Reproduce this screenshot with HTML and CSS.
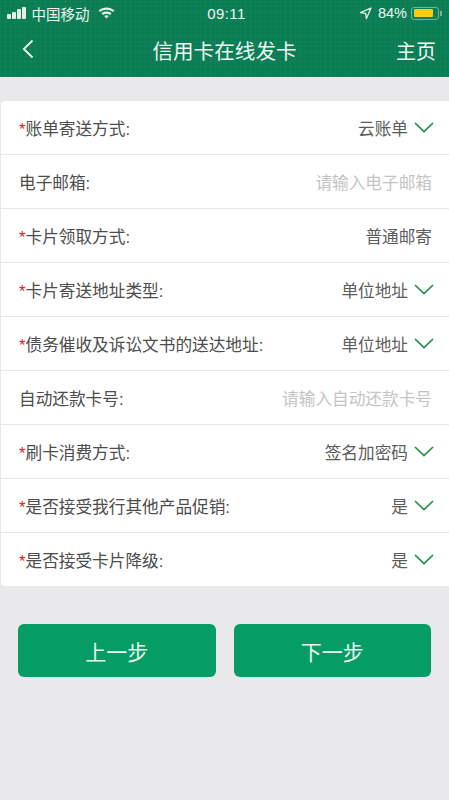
FILE: index.html
```html
<!DOCTYPE html>
<html lang="zh-CN">
<head>
    <meta charset="UTF-8">
    <meta name="viewport" content="width=device-width, initial-scale=1.0">
    <title>信用卡在线发卡</title>
    <link rel="stylesheet" href="styles.css">
</head>
<body>
    <header class="top">
        <div class="status-bar">
            <div class="status-left">
                <span class="signal"><i class="b1"></i><i class="b2"></i><i class="b3"></i><i class="b4"></i></span>
                <span class="carrier">中国移动</span>
                <svg class="wifi" width="17" height="13" viewBox="0 0 17 13">
                    <path d="M0.5 4.4C5 0.4 12 0.4 16.5 4.4L14.9 6.1C11.2 2.9 5.8 2.9 2.1 6.1Z" fill="#e4f1ea"/>
                    <path d="M3.4 7.2C6.2 4.9 10.8 4.9 13.6 7.2L12 8.9C10 7.3 7 7.3 5 8.9Z" fill="#e4f1ea"/>
                    <path d="M6.2 10C7.5 9 9.5 9 10.8 10L8.5 12.6Z" fill="#e4f1ea"/>
                </svg>
            </div>
            <div class="status-time">09:11</div>
            <div class="status-right">
                <svg class="arrow" width="13" height="13" viewBox="0 0 13 13">
                    <path d="M12 1L1.5 5.6L6.6 6.4L7.4 11.6Z" fill="none" stroke="#e4f1ea" stroke-width="1.3" stroke-linejoin="round"/>
                </svg>
                <span>84%</span>
                <span class="battery"><span class="battery-level"></span></span>
                <span class="battery-tip"></span>
            </div>
        </div>
        <div class="nav-bar">
            <svg class="back" width="12" height="20" viewBox="0 0 12 20">
                <path d="M10.5 1.5L1.8 10L10.5 18.5" fill="none" stroke="#eef6f2" stroke-width="1.8"/>
            </svg>
            <h1>信用卡在线发卡</h1>
            <span class="home">主页</span>
        </div>
    </header>

    <div class="form-card">
        <div class="row">
            <span class="label"><em>*</em>账单寄送方式:</span>
            <span class="value">云账单</span>
            <svg class="chevron" width="20" height="11" viewBox="0 0 20 11"><path d="M1 1L10 9.5L19 1" fill="none" stroke="#1e9048" stroke-width="1.7"/></svg>
        </div>
        <div class="row">
            <span class="label">电子邮箱:</span>
            <span class="placeholder">请输入电子邮箱</span>
        </div>
        <div class="row">
            <span class="label"><em>*</em>卡片领取方式:</span>
            <span class="value">普通邮寄</span>
        </div>
        <div class="row">
            <span class="label"><em>*</em>卡片寄送地址类型:</span>
            <span class="value">单位地址</span>
            <svg class="chevron" width="20" height="11" viewBox="0 0 20 11"><path d="M1 1L10 9.5L19 1" fill="none" stroke="#1e9048" stroke-width="1.7"/></svg>
        </div>
        <div class="row">
            <span class="label"><em>*</em>债务催收及诉讼文书的送达地址:</span>
            <span class="value">单位地址</span>
            <svg class="chevron" width="20" height="11" viewBox="0 0 20 11"><path d="M1 1L10 9.5L19 1" fill="none" stroke="#1e9048" stroke-width="1.7"/></svg>
        </div>
        <div class="row">
            <span class="label">自动还款卡号:</span>
            <span class="placeholder">请输入自动还款卡号</span>
        </div>
        <div class="row">
            <span class="label"><em>*</em>刷卡消费方式:</span>
            <span class="value">签名加密码</span>
            <svg class="chevron" width="20" height="11" viewBox="0 0 20 11"><path d="M1 1L10 9.5L19 1" fill="none" stroke="#1e9048" stroke-width="1.7"/></svg>
        </div>
        <div class="row">
            <span class="label"><em>*</em>是否接受我行其他产品促销:</span>
            <span class="value">是</span>
            <svg class="chevron" width="20" height="11" viewBox="0 0 20 11"><path d="M1 1L10 9.5L19 1" fill="none" stroke="#1e9048" stroke-width="1.7"/></svg>
        </div>
        <div class="row">
            <span class="label"><em>*</em>是否接受卡片降级:</span>
            <span class="value">是</span>
            <svg class="chevron" width="20" height="11" viewBox="0 0 20 11"><path d="M1 1L10 9.5L19 1" fill="none" stroke="#1e9048" stroke-width="1.7"/></svg>
        </div>
    </div>

    <div class="actions">
        <button type="button">上一步</button>
        <button type="button">下一步</button>
    </div>
</body>
</html>
```

FILE: styles.css
```css
* {
    box-sizing: border-box;
}
body {
    margin: 0;
    height: 800px;
    overflow: hidden;
    background: #e9e9eb;
    font-family: "Liberation Sans", "Noto Sans CJK SC", sans-serif;
    color: #555;
}
.top {
    height: 77px;
    color: #eef6f2;
    background-color: #0b7d55;
    background-image:
        repeating-linear-gradient(0deg, rgba(255, 255, 255, 0.025) 0 1px, transparent 1px 5px),
        repeating-linear-gradient(90deg, rgba(255, 255, 255, 0.025) 0 1px, transparent 1px 5px);
}
.status-bar {
    height: 26px;
    padding: 0 7px 0 7px;
    display: grid;
    grid-template-columns: 1fr auto 1fr;
    align-items: center;
}
.status-left {
    display: flex;
    align-items: center;
}
.signal {
    display: flex;
    align-items: flex-end;
    gap: 1.5px;
    height: 12px;
    margin-right: 6px;
}
.signal i {
    width: 3.5px;
    background: #e4f1ea;
    border-radius: 1px;
}
.signal .b1 { height: 5px; }
.signal .b2 { height: 7px; }
.signal .b3 { height: 10px; }
.signal .b4 { height: 12px; }
.carrier {
    font-size: 14.5px;
}
.wifi {
    margin-left: 8px;
    margin-bottom: 2px;
}
.status-time {
    margin-left: 4px;
    font-size: 15px;
    letter-spacing: 0.4px;
}
.status-right {
    display: flex;
    align-items: center;
    justify-content: flex-end;
    font-size: 14.5px;
}
.arrow {
    margin-right: 6px;
}
.battery {
    width: 28px;
    height: 13px;
    margin-left: 4px;
    padding: 1.5px;
    border: 1px solid #6fb596;
    border-radius: 3px;
}
.battery-level {
    display: block;
    width: 84%;
    height: 100%;
    background: #f6cd15;
    border-radius: 1px;
}
.battery-tip {
    width: 2px;
    height: 5px;
    margin-left: 1px;
    background: #6fb596;
}
.nav-bar {
    height: 51px;
    padding: 0 22px 3px 22px;
    display: grid;
    grid-template-columns: 1fr auto 1fr;
    align-items: center;
}
.nav-bar h1 {
    margin: 0;
    font-size: 20.6px;
    font-weight: normal;
}
.back {
    margin-bottom: 2px;
}
.home {
    margin-right: -9px;
    font-size: 20px;
    justify-self: end;
}
.form-card {
    margin: 24px 0 0 1px;
    background: #fff;
    border-radius: 4px 0 0 4px;
}
.row {
    height: 54px;
    padding: 0 16px 0 18px;
    display: flex;
    align-items: center;
    border-bottom: 1px solid #e8e8e8;
    font-size: 16.67px;
}
.row:last-child {
    height: 53px;
    border-bottom: none;
}
.row > span:last-child {
    margin-right: 1px;
}
.label {
    flex: 1;
    color: #4d4d4d;
}
.label em {
    color: #e02020;
    font-style: normal;
}
.value {
    color: #5c5c5c;
}
.placeholder {
    color: #c4c4c4;
}
.chevron {
    margin-left: 6px;
    margin-right: -1px;
}
.actions {
    margin: 38px 18px 0;
    display: flex;
    gap: 18px;
}
.actions button {
    flex: 1;
    height: 53px;
    border: none;
    border-radius: 6px;
    background: #069c66;
    color: #e8f6ef;
    font-family: inherit;
    font-size: 21px;
}
```
